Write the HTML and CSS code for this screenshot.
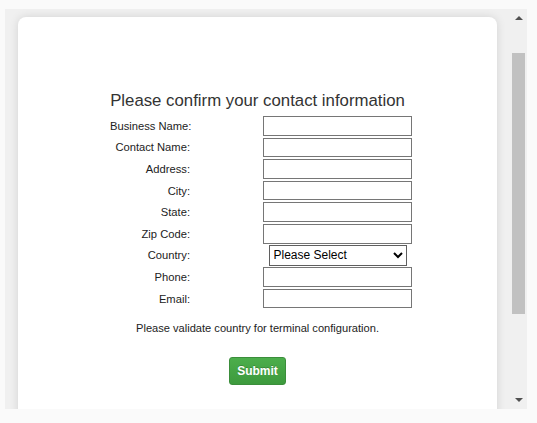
FILE: index.html
```html
<!DOCTYPE html>
<html>
<head>
<meta charset="utf-8">
<link rel="stylesheet" href="styles.css">
</head>
<body>
<div class="frame">
  <div class="viewport">
    <div class="card">
      <h1 class="title">Please confirm your contact information</h1>
      <div class="form">
        <label class="lbl">Business Name:</label><div class="cell"><input class="field" type="text"></div>
        <label class="lbl">Contact Name:</label><div class="cell"><input class="field" type="text"></div>
        <label class="lbl">Address:</label><div class="cell"><input class="field" type="text"></div>
        <label class="lbl">City:</label><div class="cell"><input class="field" type="text"></div>
        <label class="lbl">State:</label><div class="cell"><input class="field" type="text"></div>
        <label class="lbl">Zip Code:</label><div class="cell"><input class="field" type="text"></div>
        <label class="lbl">Country:</label><div class="cell"><select class="sel"><option>Please Select</option></select></div>
        <label class="lbl">Phone:</label><div class="cell"><input class="field" type="text"></div>
        <label class="lbl">Email:</label><div class="cell"><input class="field" type="text"></div>
      </div>
      <p class="note">Please validate country for terminal configuration.</p>
      <div class="actions"><button class="submit">Submit</button></div>
    </div>
  </div>
  <div class="scrollbar">
    <div class="arrow up"></div>
    <div class="track"><div class="thumb"></div></div>
    <div class="arrow down"></div>
  </div>
</div>
</body>
</html>
```
FILE: styles.css
```css
html, body {
  margin: 0;
  padding: 0;
  background: #fafafa;
  font-family: "Liberation Sans", Arial, sans-serif;
}
body {
  padding: 9px 10px 0 5px;
}
.frame {
  width: 522px;
  height: 400px;
  background: #f0f0f0;
  display: flex;
  overflow: hidden;
}
.viewport {
  flex: 1;
  overflow: hidden;
  padding: 8px 13px 0 13px;
}
.card {
  background: #fff;
  border-radius: 8px 8px 0 0;
  box-shadow: 0 0 10px rgba(0,0,0,0.12);
  height: 420px;
  padding-top: 74px;
  box-sizing: border-box;
}
.title {
  margin: 0;
  font-weight: normal;
  font-size: 16.8px;
  color: #333;
  text-align: center;
  line-height: 20px;
}
.form {
  display: grid;
  grid-template-columns: 80px 149px;
  column-gap: 73px;
  grid-auto-rows: 21.6px;
  align-items: center;
  margin: 4px 0 0 92px;
}
.lbl {
  font-size: 11.2px;
  color: #222;
  text-align: right;
  white-space: nowrap;
}
.cell {
  display: flex;
  justify-content: center;
}
.field {
  box-sizing: border-box;
  width: 149px;
  height: 19.5px;
  margin: 0;
  border: 1px solid #767676;
  padding: 0 3px;
  background: #fff;
  font-size: 12px;
}
.sel {
  box-sizing: border-box;
  width: 138px;
  height: 21px;
  margin: 0;
  font-family: "Liberation Sans", Arial, sans-serif;
  font-size: 12px;
  color: #000;
  border: 1px solid #5f5f5f;
  border-radius: 0;
  background: #fff;
}
.note {
  margin: 13px 0 0 0;
  font-size: 11.1px;
  color: #222;
  text-align: center;
}
.actions {
  display: flex;
  justify-content: center;
  margin-top: 23px;
}
.submit {
  width: 57px;
  height: 28px;
  border: 1px solid #3b8e3b;
  border-radius: 3px;
  background: linear-gradient(#4cae4c, #3d9a3d);
  color: #fff;
  font-family: "Liberation Sans", Arial, sans-serif;
  font-weight: bold;
  font-size: 12px;
  text-shadow: 0 -1px 0 rgba(0,0,0,0.2);
  padding: 0;
}
.scrollbar {
  width: 17px;
  display: flex;
  flex-direction: column;
  align-items: center;
  background: #f0f0f0;
}
.arrow {
  width: 0;
  height: 0;
  border-left: 4px solid transparent;
  border-right: 4px solid transparent;
}
.up {
  margin-top: 7px;
  border-bottom: 4px solid #505050;
}
.down {
  margin-bottom: 7px;
  border-top: 4px solid #505050;
}
.track {
  flex: 1;
  width: 13px;
  padding-top: 33px;
}
.thumb {
  width: 13px;
  height: 261px;
  background: #c1c1c1;
}
```
